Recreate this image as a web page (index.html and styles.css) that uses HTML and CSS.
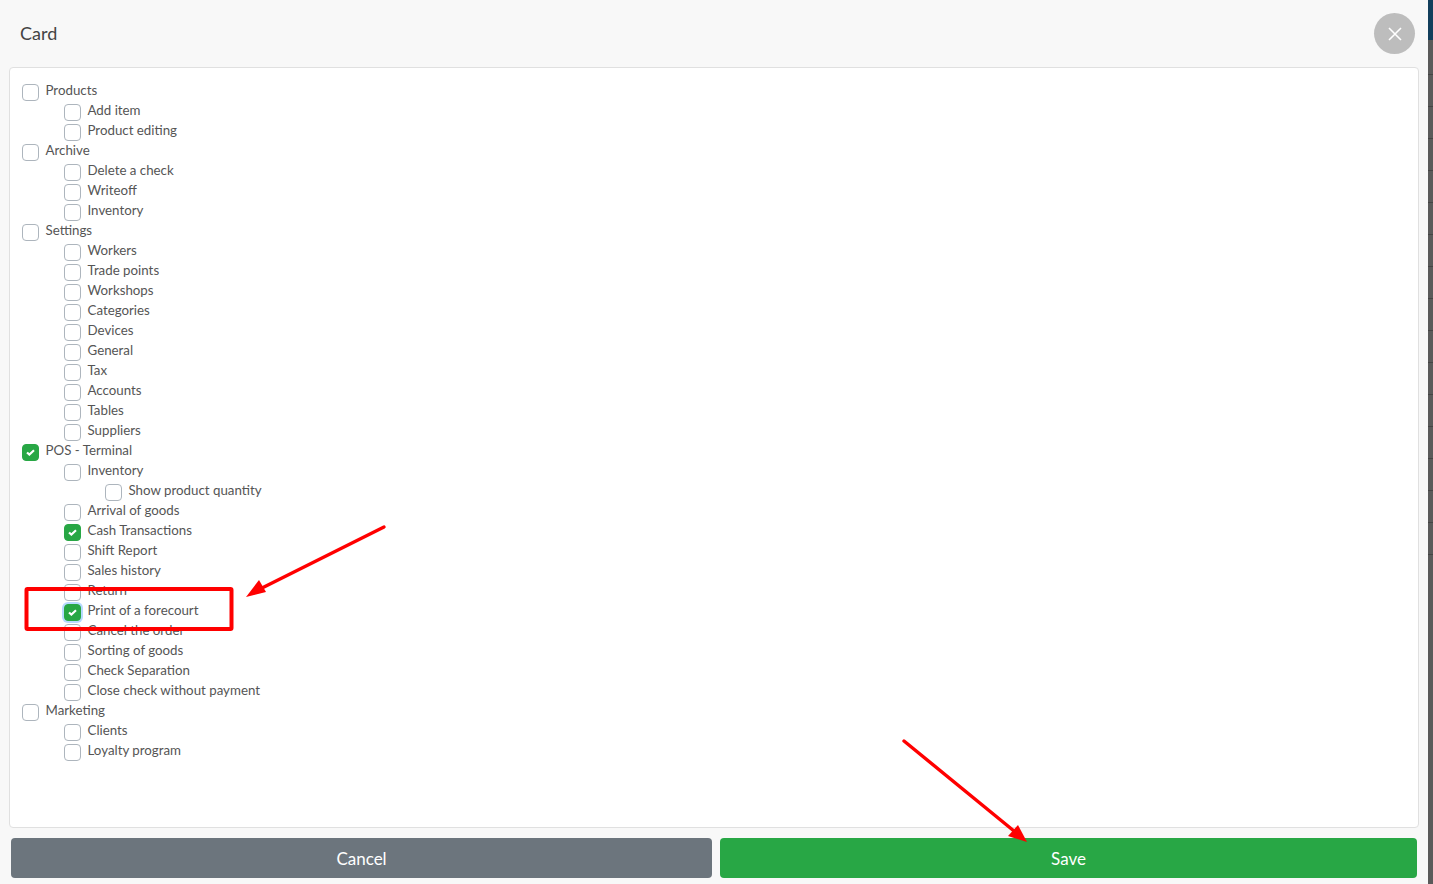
FILE: index.html
```html
<!DOCTYPE html>
<html lang="en">
<head>
    <meta charset="UTF-8">
    <title>Card</title>
    <link rel="stylesheet" href="styles.css">
</head>
<body>
    <div class="backdrop-strip"></div>
    <div class="backdrop-lines"></div>
    <div class="modal">
        <div class="modal-header">
            <span class="modal-title">Card</span>
            <button class="close-btn" type="button">
                <svg width="14" height="14" viewBox="0 0 14 14"><path d="M1 1L13 13M13 1L1 13" stroke="#fff" stroke-width="1.6" fill="none"/></svg>
            </button>
        </div>

        <div class="card">
            <label class="row"><span class="box"></span>Products</label>
            <label class="row sub"><span class="box"></span>Add item</label>
            <label class="row sub"><span class="box"></span>Product editing</label>
            <label class="row"><span class="box"></span>Archive</label>
            <label class="row sub"><span class="box"></span>Delete a check</label>
            <label class="row sub"><span class="box"></span>Writeoff</label>
            <label class="row sub"><span class="box"></span>Inventory</label>
            <label class="row"><span class="box"></span>Settings</label>
            <label class="row sub"><span class="box"></span>Workers</label>
            <label class="row sub"><span class="box"></span>Trade points</label>
            <label class="row sub"><span class="box"></span>Workshops</label>
            <label class="row sub"><span class="box"></span>Categories</label>
            <label class="row sub"><span class="box"></span>Devices</label>
            <label class="row sub"><span class="box"></span>General</label>
            <label class="row sub"><span class="box"></span>Tax</label>
            <label class="row sub"><span class="box"></span>Accounts</label>
            <label class="row sub"><span class="box"></span>Tables</label>
            <label class="row sub"><span class="box"></span>Suppliers</label>
            <label class="row"><span class="box checked"><svg width="9" height="7" viewBox="0 0 9 7"><path d="M1 3.4L3.4 5.6L8 1.2" stroke="#fff" stroke-width="2.1" fill="none"/></svg></span>POS - Terminal</label>
            <label class="row sub"><span class="box"></span>Inventory</label>
            <label class="row subsub"><span class="box"></span>Show product quantity</label>
            <label class="row sub"><span class="box"></span>Arrival of goods</label>
            <label class="row sub"><span class="box checked"><svg width="9" height="7" viewBox="0 0 9 7"><path d="M1 3.4L3.4 5.6L8 1.2" stroke="#fff" stroke-width="2.1" fill="none"/></svg></span>Cash Transactions</label>
            <label class="row sub"><span class="box"></span>Shift Report</label>
            <label class="row sub"><span class="box"></span>Sales history</label>
            <label class="row sub"><span class="box"></span>Return</label>
            <label class="row sub"><span class="box checked focused"><svg width="9" height="7" viewBox="0 0 9 7"><path d="M1 3.4L3.4 5.6L8 1.2" stroke="#fff" stroke-width="2.1" fill="none"/></svg></span>Print of a forecourt</label>
            <label class="row sub"><span class="box"></span>Cancel the order</label>
            <label class="row sub"><span class="box"></span>Sorting of goods</label>
            <label class="row sub"><span class="box"></span>Check Separation</label>
            <label class="row sub"><span class="box"></span>Close check without payment</label>
            <label class="row"><span class="box"></span>Marketing</label>
            <label class="row sub"><span class="box"></span>Clients</label>
            <label class="row sub"><span class="box"></span>Loyalty program</label>
        </div>

        <div class="modal-footer">
            <button class="btn btn-cancel" type="button">Cancel</button>
            <button class="btn btn-save" type="button">Save</button>
        </div>
    </div>

    <!-- red annotations drawn on top of the screenshot -->
    <svg class="marks" width="1433" height="884" viewBox="0 0 1433 884">
        <rect x="26.5" y="589" width="205" height="40" rx="1" fill="none" stroke="#f00" stroke-width="4"/>
        <path d="M384 527L262 588" stroke="#f00" stroke-width="3.4" stroke-linecap="round" fill="none"/>
        <path d="M246 597L259 580L266 592Z" fill="#f00"/>
        <path d="M904 741L1014 831" stroke="#f00" stroke-width="3.4" stroke-linecap="round" fill="none"/>
        <path d="M1027 842L1008 836L1018 825Z" fill="#f00"/>
    </svg>
</body>
</html>
```

FILE: styles.css
```css
* {
    box-sizing: border-box;
}

html, body {
    height: 100%;
}

body {
    margin: 0;
    background-color: #5a5a5a;
    font-family: "Lato", sans-serif;
    color: #444;
    overflow: hidden;
    position: relative;
}

/* Page behind the modal, visible at the right edge */
.backdrop-strip {
    position: absolute;
    top: 0;
    right: 0;
    width: 5px;
    height: 40px;
    background-color: #123f5c;
}

.backdrop-lines {
    position: absolute;
    top: 74px;
    right: 0;
    width: 5px;
    height: 512px;
    background-image: repeating-linear-gradient(#444 0, #444 1px, transparent 1px, transparent 32px);
}

.modal {
    width: 1428px;
    height: 884px;
    background-color: #f8f8f8;
    display: flex;
    flex-direction: column;
}

/* Header */
.modal-header {
    height: 67px;
    flex: none;
    display: flex;
    align-items: center;
    justify-content: space-between;
    padding: 0 13px 0 20px;
}

.modal-title {
    margin-bottom: 1px;
    font-size: 18px;
    color: #444;
}

.close-btn {
    width: 41px;
    height: 41px;
    border: none;
    border-radius: 50%;
    background-color: #bdbdbd;
    padding: 0;
    display: flex;
    align-items: center;
    justify-content: center;
}

/* Card with the checkbox list */
.card {
    height: 761px;
    flex: none;
    margin: 0 9px;
    padding: 13px 12px;
    background-color: #fff;
    border: 1px solid #e0e0e0;
    border-radius: 4px;
}

.row {
    display: flex;
    align-items: flex-start;
    height: 20px;
    font-size: 13.3px;
    line-height: 19px;
    color: #555;
}

.row.sub {
    padding-left: 42px;
}

.row.subsub {
    padding-left: 83px;
}

.box {
    width: 16.5px;
    height: 16.5px;
    flex: none;
    margin: 3px 7px 0 0;
    border: 1px solid #adb5bd;
    border-radius: 4px;
    background-color: #fff;
    display: flex;
    align-items: center;
    justify-content: center;
}

.box.checked {
    background-color: #28a745;
    border-color: #28a745;
}

.box.focused {
    box-shadow: 0 0 0 2px #b8daff;
}

/* Footer buttons */
.modal-footer {
    flex: 1;
    display: flex;
    gap: 8px;
    padding: 10px 11px 6px;
}

.btn {
    height: 40px;
    padding-top: 2px;
    border: none;
    border-radius: 4px;
    color: #fff;
    font-family: "Lato", sans-serif;
    font-size: 17px;
}

.btn-cancel {
    width: 701px;
    background-color: #6c757d;
}

.btn-save {
    width: 697px;
    background-color: #28a745;
}

/* Annotations */
.marks {
    position: absolute;
    top: 0;
    left: 0;
}
```
